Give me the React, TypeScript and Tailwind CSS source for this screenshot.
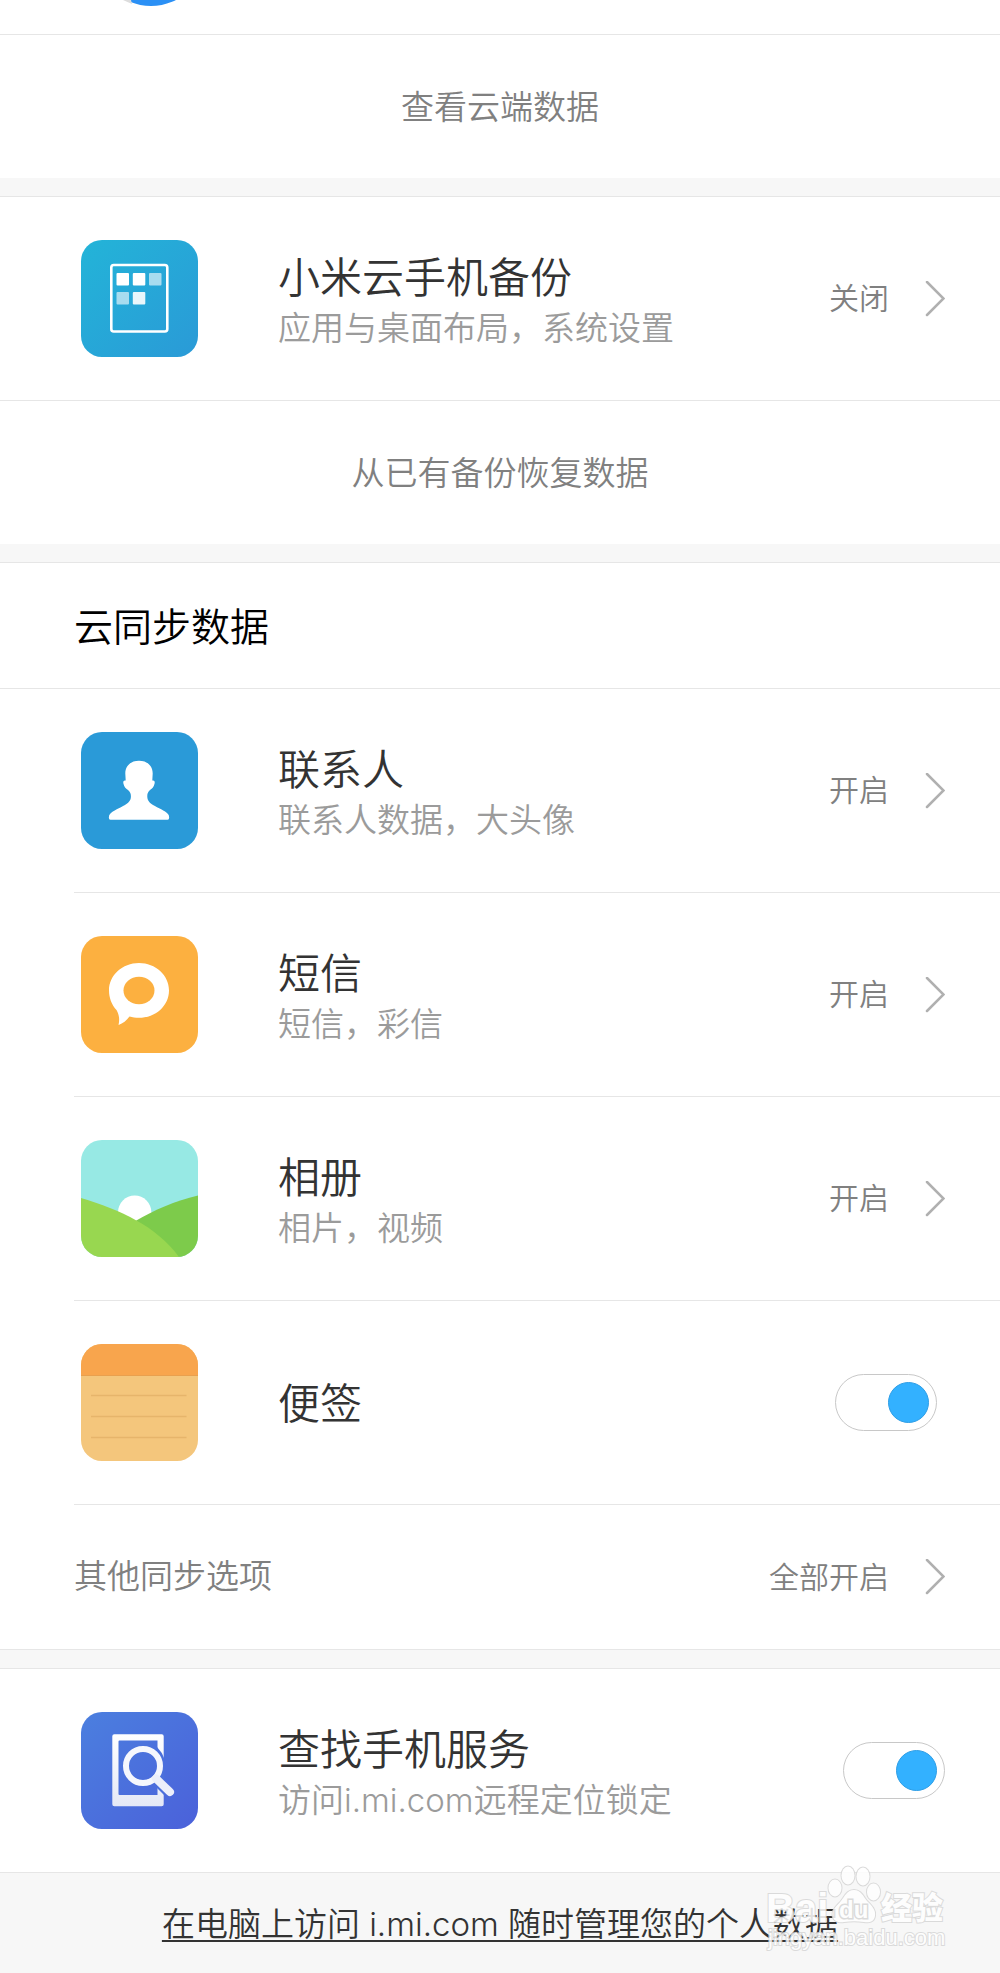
import { useState } from "react";
import type { ReactNode } from "react";

const iconClass = "size-[117px] shrink-0 rounded-[21px]";

function BackupIcon() {
  return (
    <svg viewBox="0 0 117 117" className={iconClass} aria-hidden="true">
      <defs>
        <linearGradient id="backup-bg" x1="0" y1="0" x2="1" y2="1">
          <stop offset="0" stopColor="#23b4d8" />
          <stop offset="1" stopColor="#2a9ad7" />
        </linearGradient>
      </defs>
      <rect width="117" height="117" fill="url(#backup-bg)" />
      <rect x="30.3" y="25" width="56" height="66.5" rx="2.5" fill="none" stroke="#fff" strokeWidth="2.6" />
      <g fill="#fff">
        <rect x="35.5" y="33" width="12.5" height="12.5" rx="1" />
        <rect x="51.8" y="33" width="12.5" height="12.5" rx="1" />
        <rect x="68" y="33" width="12.5" height="12.5" rx="1" opacity="0.6" />
        <rect x="35.5" y="52" width="12.5" height="12.5" rx="1" opacity="0.6" />
        <rect x="51.8" y="52" width="12.5" height="12.5" rx="1" opacity="0.9" />
      </g>
    </svg>
  );
}

function ContactsIcon() {
  return (
    <svg viewBox="0 0 117 117" className={iconClass} aria-hidden="true">
      <rect width="117" height="117" fill="#2a9ad8" />
      <path
        fill="#fff"
        d="M58 28.7C66.500 28.700 71.700 34 71.700 41.500L71.300 48.500C73.500 48 74 49.500 73.600 51.500C72.800 55 71.500 56.500 69 58C66.500 60.500 66.200 62 66.300 65C66.600 69 69 71 72 73C77 76 84 78.500 87 82C88.200 83.500 88.300 85 88 86.500Q87.700 87.700 86.500 87.700H29.500Q28.300 87.700 28 86.500C27.700 85 27.800 83.500 29 82C32 78.500 39 76 44 73C47 71 49.700 69 49.900 65C50 62 49.500 60.500 47 58C44.500 56.500 43.200 55 42.400 51.500C42 49.500 42.500 48 44.700 48.500L44.300 41.500C44.300 34 49.500 28.700 58 28.700Z"
      />
    </svg>
  );
}

function MessagesIcon() {
  return (
    <svg viewBox="0 0 117 117" className={iconClass} aria-hidden="true">
      <rect width="117" height="117" fill="#fcb040" />
      <path
        fill="#fff"
        d="M58 27C74.600 27 88 39.200 88 54.400S74.600 81.800 58 81.800C54.500 81.800 51.500 81.200 48.500 80.400C45.500 84.500 42 87.300 37.500 89C38.800 83.500 38.200 78.500 35.500 74C30.500 68.500 28 61.500 28 54.400C28 39.200 41.400 27 58 27Z"
      />
      <ellipse cx="58" cy="54.500" rx="15.500" ry="13.700" fill="#fcb040" />
    </svg>
  );
}

function GalleryIcon() {
  return (
    <svg viewBox="0 0 117 117" className={iconClass} aria-hidden="true">
      <rect width="117" height="117" fill="#97e9e4" />
      <circle cx="53.700" cy="72.300" r="16.700" fill="#fff" />
      <path d="M117 55.500C94 61 73 70 54.500 81L80 117H117Z" fill="#7dcb4b" />
      <path d="M0 58C40 70 75 86 98 117H0Z" fill="#98d750" />
    </svg>
  );
}

function NotesIcon() {
  return (
    <svg viewBox="0 0 117 117" className={iconClass} aria-hidden="true">
      <rect width="117" height="117" fill="#f4c67c" />
      <rect width="117" height="31" fill="#f8a54d" />
      <path d="M0 31.500H117" stroke="#e8a04f" />
      <path d="M10 51.500H105.500M10 72.500H105.500M10 93.500H105.500" stroke="#e6b56b" strokeWidth="1.500" />
    </svg>
  );
}

function FindPhoneIcon() {
  return (
    <svg viewBox="0 0 117 117" className={iconClass} aria-hidden="true">
      <defs>
        <linearGradient id="find-bg" x1="0" y1="0" x2="1" y2="1">
          <stop offset="0" stopColor="#4b7fdf" />
          <stop offset="1" stopColor="#4b61da" />
        </linearGradient>
        <linearGradient id="find-body" x1="0" y1="0" x2="0" y2="1">
          <stop offset="0" stopColor="#fff" />
          <stop offset="1" stopColor="#e4e8f6" />
        </linearGradient>
      </defs>
      <rect width="117" height="117" fill="url(#find-bg)" />
      <path
        fill="url(#find-body)"
        fillRule="evenodd"
        d="M33.300 22.300H80.700Q82.700 22.300 82.700 24.300V92.300Q82.700 94.300 80.700 94.300H33.300Q31.300 94.300 31.300 92.300V24.300Q31.300 22.300 33.300 22.300ZM38.500 28.500Q37.500 28.500 37.500 29.500V82Q37.500 83 38.500 83H76.500V28.500Z"
      />
      {/* gap between the phone frame and the lens */}
      <path d="M76 35Q81 40 83.500 47V83.500L76 76Z" fill="#4b70dc" />
      <circle cx="62" cy="54" r="17" fill="none" stroke="#f5f7fd" strokeWidth="6" />
      <path d="M75 66.500L89 80" stroke="#eceffa" strokeWidth="8" strokeLinecap="round" />
    </svg>
  );
}

function Chevron() {
  return (
    <svg viewBox="0 0 20 36" className="h-9 w-5 shrink-0" fill="none" aria-hidden="true">
      <path d="M2 1L18.500 17.500L2 34" stroke="#b0b0b0" strokeWidth="2.500" strokeLinecap="round" />
    </svg>
  );
}

function Value({ text }: { text: string }) {
  return (
    <span className="flex shrink-0 items-center gap-9 text-[30px] text-[#808080]">
      {text}
      <Chevron />
    </span>
  );
}

function Label({ title, desc }: { title: string; desc?: string }) {
  return (
    <span className="flex min-w-0 flex-1 flex-col pt-[3px] text-left">
      <span className="text-[42px] leading-[56px] text-[#333]">{title}</span>
      {desc && <span className="text-[33px] leading-[44px] text-[#9b9b9b]">{desc}</span>}
    </span>
  );
}

type RowProps = { icon: ReactNode; title: string; desc?: string };

function LinkRow({ icon, title, desc, value }: RowProps & { value: string }) {
  return (
    <button type="button" className="flex w-full items-center gap-20 py-[43px] pr-[55px] pl-[7px]">
      {icon}
      <Label title={title} desc={desc} />
      <Value text={value} />
    </button>
  );
}

function SwitchRow({ icon, title, desc }: RowProps) {
  const [on, setOn] = useState(true);
  return (
    <label className="flex w-full items-center gap-20 py-[43px] pl-[7px]">
      {icon}
      <Label title={title} desc={desc} />
      <input
        type="checkbox"
        role="switch"
        checked={on}
        onChange={(e) => setOn(e.target.checked)}
        className="flex h-[57px] w-[102px] shrink-0 appearance-none items-center rounded-full border border-[#c8c8c8] bg-white px-[7px] before:size-[41px] before:rounded-full before:border before:border-[#b5b5b5] before:bg-[#ccc] before:content-[''] checked:justify-end checked:before:border-[#2f9ee6] checked:before:bg-[#33b1ff]"
      />
    </label>
  );
}

function ActionRow({ text }: { text: string }) {
  return (
    <button type="button" className="h-36 w-full border-t border-[#e6e6e6] pt-0.5 text-center text-[33px] text-[#808080]">
      {text}
    </button>
  );
}

function Watermark() {
  return (
    <svg viewBox="0 0 184 88" className="pointer-events-none absolute right-[52px] bottom-[21px] h-[88px] w-[184px]">
      <g fill="#fff" stroke="#d6d6d6" strokeWidth="2" paintOrder="stroke" opacity="0.85">
        <text x="2" y="58" className="font-['Liberation_Sans',sans-serif] text-[40px] font-bold">Bai</text>
        <ellipse cx="71" cy="24" rx="6.500" ry="8.500" />
        <ellipse cx="84" cy="11.500" rx="6.500" ry="9" />
        <ellipse cx="99" cy="12.500" rx="6.500" ry="9" />
        <ellipse cx="109.500" cy="28" rx="6.500" ry="8.500" />
        <path d="M90 26C97 26 99 32 103 37C108 42 112 46 111 52C110 58 105 59 100 58C93 57 87 57 80 58C74 59 69 57 68.500 51C68 45 73 42 77 37C81 32 83 26 90 26Z" />
        <text x="75" y="54" strokeWidth="3" className="font-['Liberation_Sans',sans-serif] text-[24px] font-bold">du</text>
        <text x="117" y="55" className="font-['Noto_Sans_CJK_SC',sans-serif] text-[31px] font-black">经验</text>
        <text x="4" y="81" className="font-['Liberation_Sans',sans-serif] text-[22px]">jingyan.baidu.com</text>
      </g>
    </svg>
  );
}

export default function App() {
  return (
    <main className="flex min-h-screen flex-col bg-[#f7f7f7] font-[Inter,'Noto_Sans_CJK_SC',sans-serif] font-[350]">
      <section className="bg-white">
        {/* tail of the storage card scrolled off the top */}
        <div className="h-[34px] pl-24">
          <svg viewBox="0 0 110 34" className="h-[34px] w-[110px]" aria-hidden="true">
            <circle cx="55" cy="-49" r="55" fill="#2b90f5" />
            <path d="M27 0H35L36 4Z" fill="#dcdcdc" />
          </svg>
        </div>
        <ActionRow text="查看云端数据" />
      </section>

      <section className="mt-[18px] border-t border-[#e6e6e6] bg-white">
        <div className="pl-[74px]">
          <LinkRow icon={<BackupIcon />} title="小米云手机备份" desc="应用与桌面布局，系统设置" value="关闭" />
        </div>
        <ActionRow text="从已有备份恢复数据" />
      </section>

      <section className="mt-[18px] border-y border-[#e6e6e6] bg-white">
        <h2 className="pt-[33px] pb-[30px] pl-[74px] text-[39px] leading-[62px] text-black">云同步数据</h2>
        <div className="border-t border-[#e6e6e6] pl-[74px]">
          <ul className="divide-y divide-[#e6e6e6]">
            <li>
              <LinkRow icon={<ContactsIcon />} title="联系人" desc="联系人数据，大头像" value="开启" />
            </li>
            <li>
              <LinkRow icon={<MessagesIcon />} title="短信" desc="短信，彩信" value="开启" />
            </li>
            <li>
              <LinkRow icon={<GalleryIcon />} title="相册" desc="相片，视频" value="开启" />
            </li>
            <li className="pr-[63px]">
              <SwitchRow icon={<NotesIcon />} title="便签" />
            </li>
            <li>
              <button type="button" className="flex h-36 w-full items-center justify-between pr-[55px] text-[33px] text-[#808080]">
                其他同步选项
                <Value text="全部开启" />
              </button>
            </li>
          </ul>
        </div>
      </section>

      <section className="mt-[18px] border-y border-[#e6e6e6] bg-white pr-[55px] pl-[74px]">
        <SwitchRow icon={<FindPhoneIcon />} title="查找手机服务" desc="访问i.mi.com远程定位锁定" />
      </section>

      <footer className="relative flex flex-1 items-center justify-center pt-6 pb-5">
        <a href="#" className="text-[33px] text-[#333] underline decoration-2 underline-offset-4">
          在电脑上访问 i.mi.com 随时管理您的个人数据
        </a>
        <Watermark />
      </footer>
    </main>
  );
}
